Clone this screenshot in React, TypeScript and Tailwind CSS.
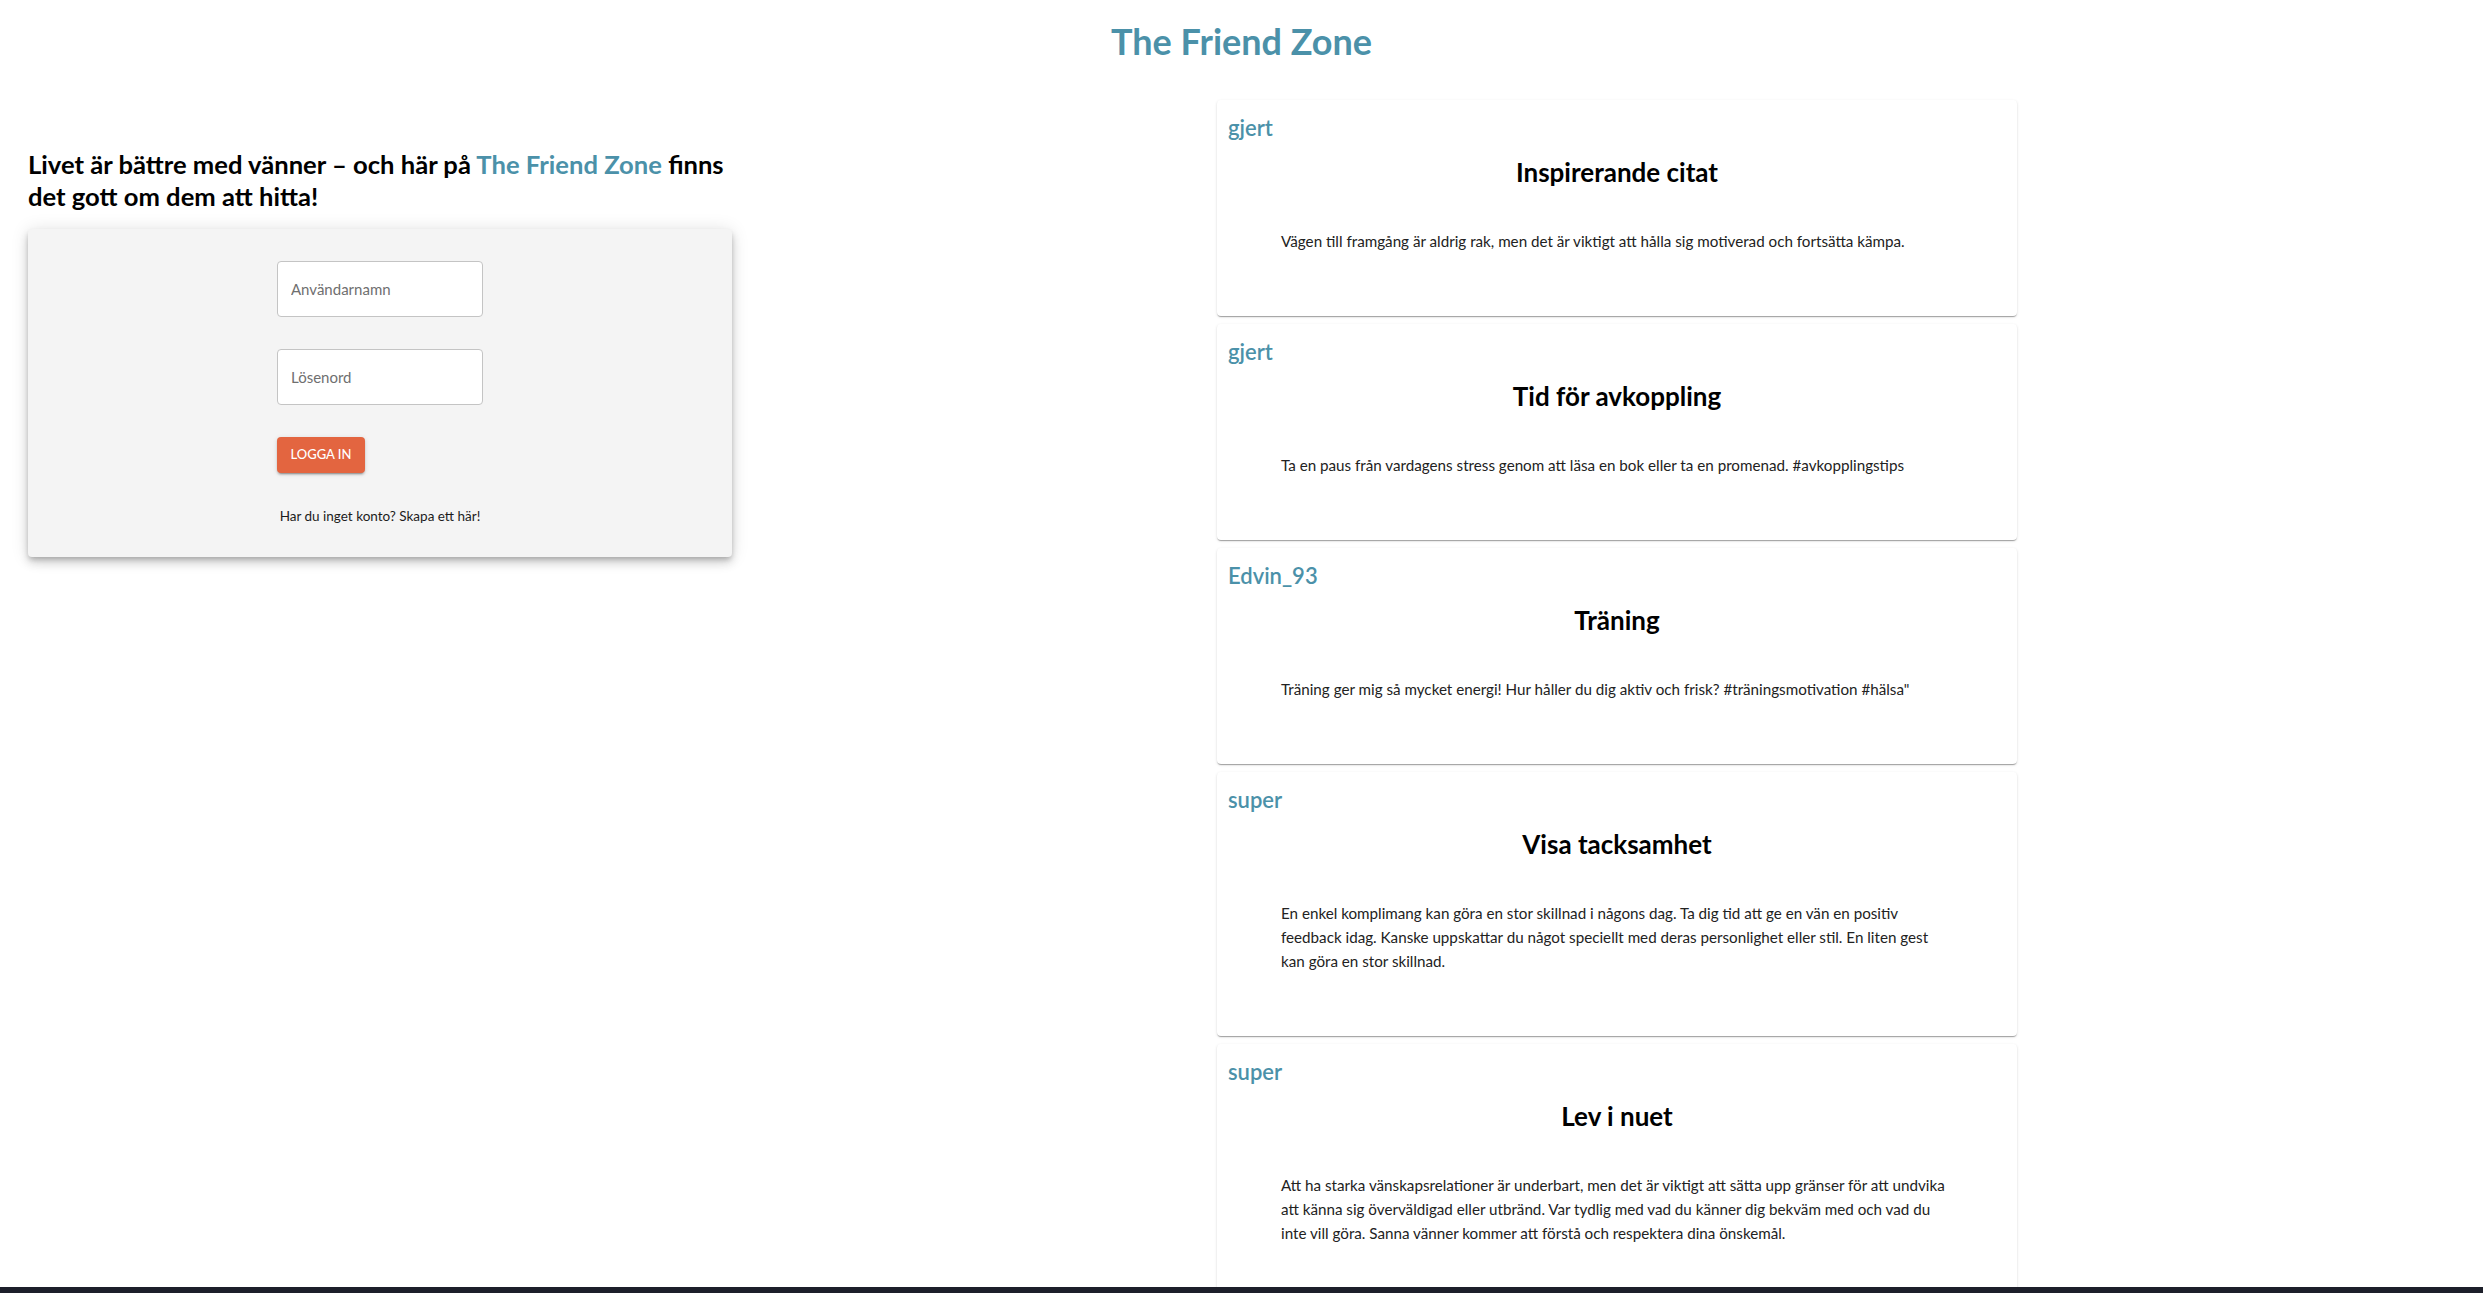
import React from "react";

type Post = {
  user: string;
  title: string;
  body: string;
};

const posts: Post[] = [
  {
    user: "gjert",
    title: "Inspirerande citat",
    body: "Vägen till framgång är aldrig rak, men det är viktigt att hålla sig motiverad och fortsätta kämpa.",
  },
  {
    user: "gjert",
    title: "Tid för avkoppling",
    body: "Ta en paus från vardagens stress genom att läsa en bok eller ta en promenad. #avkopplingstips",
  },
  {
    user: "Edvin_93",
    title: "Träning",
    body: 'Träning ger mig så mycket energi! Hur håller du dig aktiv och frisk? #träningsmotivation #hälsa"',
  },
  {
    user: "super",
    title: "Visa tacksamhet",
    body: "En enkel komplimang kan göra en stor skillnad i någons dag. Ta dig tid att ge en vän en positiv feedback idag. Kanske uppskattar du något speciellt med deras personlighet eller stil. En liten gest kan göra en stor skillnad.",
  },
  {
    user: "super",
    title: "Lev i nuet",
    body: "Att ha starka vänskapsrelationer är underbart, men det är viktigt att sätta upp gränser för att undvika att känna sig överväldigad eller utbränd. Var tydlig med vad du känner dig bekväm med och vad du inte vill göra. Sanna vänner kommer att förstå och respektera dina önskemål.",
  },
];

const PostCard = ({ post }: { post: Post }) => (
  <article className="rounded-[4px] bg-white px-[11px] py-3 shadow-[0_2px_1px_-1px_rgba(0,0,0,0.2),0_1px_1px_0_rgba(0,0,0,0.14),0_1px_3px_0_rgba(0,0,0,0.12)]">
    <h3 className="text-[22px] leading-[32px] font-semibold text-[#4b91a9]">
      {post.user}
    </h3>
    <h2 className="mt-3 text-center text-[26px] leading-[32px] font-bold text-black">
      {post.title}
    </h2>
    <p className="px-[53px] pt-[41px] pb-[51px] text-[15.2px] leading-[24px] text-[#222]">
      {post.body}
    </p>
  </article>
);

const LoginBox = () => (
  <div className="mt-[17px] flex flex-col items-center rounded-[4px] bg-[#f4f4f4] pt-8 pb-[31px] shadow-[0_3px_5px_-1px_rgba(0,0,0,0.2),0_6px_10px_0_rgba(0,0,0,0.14),0_1px_18px_0_rgba(0,0,0,0.12)]">
    <div className="flex w-[206px] flex-col">
      <input
        type="text"
        placeholder="Användarnamn"
        className="h-[56px] rounded-[4px] border border-[#c4c4c4] bg-white pl-[13px] text-[15px] text-[#222] placeholder:text-[#6f6f6f] outline-none"
      />
      <input
        type="password"
        placeholder="Lösenord"
        className="mt-8 h-[56px] rounded-[4px] border border-[#c4c4c4] bg-white pl-[13px] text-[15px] text-[#222] placeholder:text-[#6f6f6f] outline-none"
      />
      <button className="mt-8 h-[36px] w-[88px] rounded-[4px] bg-[#e36540] text-[13px] font-medium uppercase text-white shadow-[0_3px_1px_-2px_rgba(0,0,0,0.2),0_2px_2px_0_rgba(0,0,0,0.14),0_1px_5px_0_rgba(0,0,0,0.12)]">
        Logga in
      </button>
      <p className="mt-[33px] text-center text-[13.5px] leading-[20px] text-[#1c1c1c]">
        Har du inget konto? Skapa ett här!
      </p>
    </div>
  </div>
);

export default function App() {
  return (
    <div className="min-h-screen bg-white font-['Lato','Open_Sans',sans-serif]">
      <h1 className="pt-[21px] text-center text-[36px] leading-[40px] font-bold text-[#4b91a9]">
        The Friend Zone
      </h1>
      <div className="mt-[39px] flex items-start">
        <section className="ml-[28px] w-[704px] pt-[48px]">
          <h2 className="text-[25.6px] leading-[32px] font-bold text-black">
            Livet är bättre med vänner – och här på{" "}
            <span className="text-[#4b91a9]">The Friend Zone</span> finns det
            gott om dem att hitta!
          </h2>
          <LoginBox />
        </section>
        <main className="ml-[485px] flex w-[800px] flex-col gap-2 pb-4">
          {posts.map((post, i) => (
            <PostCard key={i} post={post} />
          ))}
        </main>
      </div>
      <div className="fixed inset-x-0 bottom-0 h-[6px] bg-[#1d1f2a]" />
    </div>
  );
}
